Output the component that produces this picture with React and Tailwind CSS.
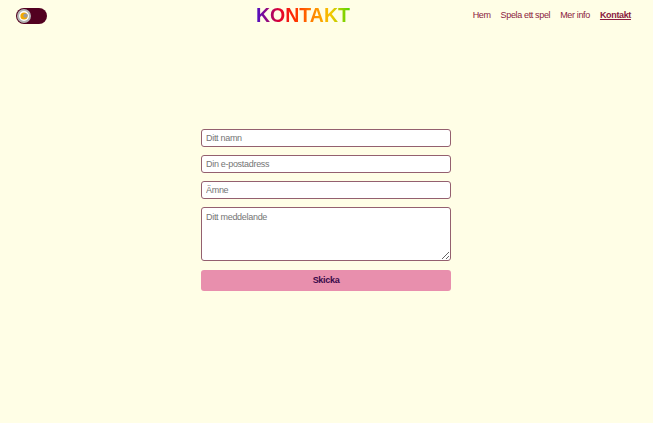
export default function App() {
  const links = ['Hem', 'Spela ett spel', 'Mer info']
  const field = 'h-[18px] rounded-[3px] border border-[#94606f] bg-white px-[4px] text-[9px] tracking-[-0.3px] placeholder:text-[#757575] outline-none'

  return (
    <div className="min-h-screen bg-[#fffee6] font-['Liberation_Sans',Arial,sans-serif]">
      <header className="flex items-center h-[32px] pl-[16px] pr-[22px]">
        <div className="w-[31px] h-[16px] rounded-full bg-[#520020] flex items-center pl-[1px]">
          <div className="w-[14px] h-[14px] rounded-full bg-white border-2 border-[#b4b4b4] flex items-center justify-center">
            <svg width="8" height="8" viewBox="0 0 8 8">
              <circle cx="4" cy="4" r="3.6" fill="#f2a900" />
              <circle cx="5.6" cy="3.6" r="2.2" fill="#9c9c9c" />
            </svg>
          </div>
        </div>
        <h1 className="ml-[209px] text-[19.5px] font-bold leading-none bg-[linear-gradient(90deg,#4a10c8,#e00030_25%,#ff2a00_40%,#ff8a00_62%,#f5c800_80%,#50d800)] bg-clip-text text-transparent">
          KONTAKT
        </h1>
        <nav className="ml-auto flex items-center gap-[10px] text-[9px] text-[#8a1a40] tracking-[-0.35px]">
          {links.map((l) => (
            <a key={l} href="#" className="hover:underline">{l}</a>
          ))}
          <a href="#" className="font-bold underline">Kontakt</a>
        </nav>
      </header>

      <form className="w-[250px] ml-[201px] mt-[97px] flex flex-col gap-[8px]" onSubmit={(e) => e.preventDefault()}>
        <input className={field} placeholder="Ditt namn" />
        <input className={field} placeholder="Din e-postadress" />
        <input className={field} placeholder="Ämne" />
        <textarea className="h-[54px] rounded-[3px] border border-[#94606f] bg-white px-[4px] py-[3px] text-[9px] tracking-[-0.3px] placeholder:text-[#757575] outline-none" placeholder="Ditt meddelande" />
        <button type="submit" className="mt-[1px] h-[21px] rounded-[3px] bg-[#e88fad] text-[9px] tracking-[-0.3px] font-bold text-[#3a0a4a]">
          Skicka
        </button>
      </form>
    </div>
  )
}
